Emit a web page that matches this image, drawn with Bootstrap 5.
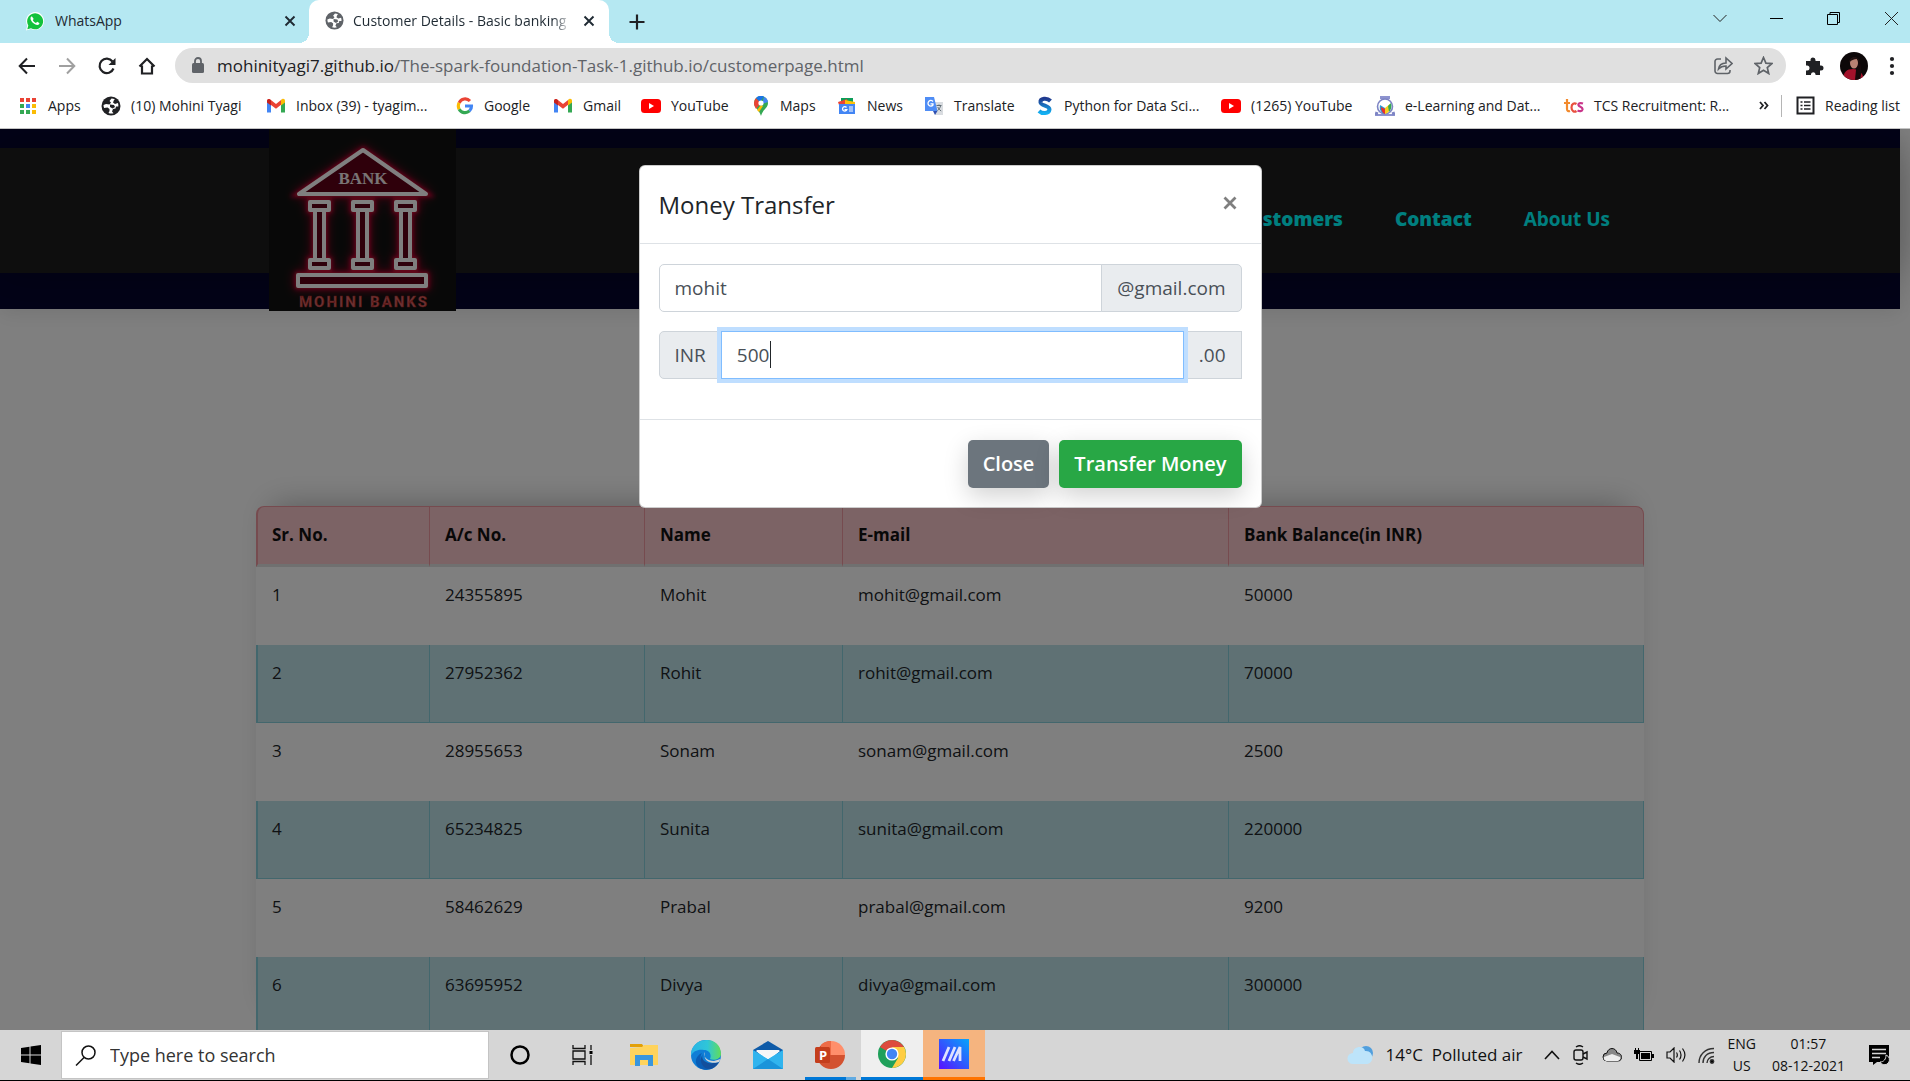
<!DOCTYPE html>
<html lang="en">
<head>
<meta charset="utf-8">
<meta name="viewport" content="width=device-width, initial-scale=1">
<title>Customer Details - Basic banking</title>
<link rel="stylesheet" href="https://cdn.jsdelivr.net/npm/bootstrap@5.3.0/dist/css/bootstrap.min.css">
<style>
body{font-family:"Open Sans","Noto Sans",sans-serif;color:#212529;height:100vh;overflow:hidden}
svg{display:block;flex:none}
button.plain{background:none;border:0;padding:0;color:inherit;display:flex;align-items:center;justify-content:center;flex:none}
/* tab strip */
.tabstrip{background:#b5e8f2;height:43px;font-size:14px;color:#1f2a33}
.tab-idle{width:309px;padding:0 10px 2px 25px;gap:10px}
.tab-live{width:300px;background:#fff;border-radius:10px 10px 0 0;padding:0 11px 2px 16px;gap:9px;position:relative}
.tab-live::before,.tab-live::after{content:"";position:absolute;bottom:0;width:10px;height:10px}
.tab-live::before{left:-10px;background:radial-gradient(circle at 0 0,transparent 10px,#fff 10px)}
.tab-live::after{right:-10px;background:radial-gradient(circle at 100% 0,transparent 10px,#fff 10px)}
.tab-label{overflow:hidden;white-space:nowrap;flex:1}
.tab-live .tab-label{-webkit-mask-image:linear-gradient(90deg,#000 92%,transparent)}
.win-btn{width:57px;height:36px}
button.win-last{width:48px;padding-left:10px}
/* toolbar */
.toolbar{height:45px;padding:0 0 0 7px}
.tool-btn{width:40px;height:36px}
button.menu-btn{width:36px}
.omnibox{height:35px;border-radius:18px;background:#e0e0e0;padding:0 3px 0 16px}
.url{font-size:17px;color:#5f6368;white-space:nowrap;text-decoration:none}
.url b{font-weight:400;color:#202124}
/* bookmarks */
.bookmarks{height:41px;border-bottom:1px solid #c4c4c4;padding:0 8px 5px 18px;display:grid;align-items:center;grid-template-columns:83px 165px 190px 97px 88px 111px 85px 87px 112px 185px 154px 189px 195px 22px 1fr}
.bookmarks a{display:flex;align-items:center;gap:10px;font-size:14px;color:#202124;text-decoration:none;white-space:nowrap}
.bookmarks .reading{border-left:1px solid #b5b5b5;padding-left:14px;height:22px}
/* web page */
.viewport{position:relative;flex:1;min-height:0;overflow:hidden;background:#fff}
.site-head{background:#05052f;margin-right:10px;height:180px;padding-top:19px;box-shadow:0 5px 20px rgba(0,0,0,.08)}
.site-nav{background:#1c1c1c;height:125px;padding:0 290px 0 269px;box-shadow:0 0 40px rgba(0,0,0,.3)}
.brand-logo{margin-top:-19px;align-self:flex-start}
.site-nav .links{gap:52px;padding-top:18px}
.site-nav a{color:#0ff;font-size:19px;font-weight:700;text-decoration:none}
.site-nav a.heavy{font-weight:800}
.accounts{margin:197px 266px 0 256px;border-radius:8px 8px 0 0;box-shadow:0 -16px 30px -16px rgba(0,0,0,.3)}
.accounts table{table-layout:fixed;width:100%;margin:0;border-collapse:separate;border-spacing:0;font-size:17px;background:#fff;border-radius:8px 8px 0 0}
.accounts th,.accounts td{background:none;box-shadow:none;padding:15px;line-height:26px;vertical-align:top;border:0;border-left:1px solid transparent;color:#212529}
.accounts th{height:61px;border-left-color:#ed969e;border-top:1px solid #ed969e;border-bottom:3px solid #e0e0e0;background:#f8c6cb;color:#111}
.accounts th:first-child{border-radius:8px 0 0 0;border-left-width:2px;padding-left:14px}
.accounts th:last-child{border-radius:0 8px 0 0;border-right:1px solid #ed969e}
.accounts td{height:78px}
.accounts td:first-child{border-left-width:2px;padding-left:14px}
.accounts .tinted td{background:#bee2e9;border-left-color:#86cfda;border-bottom:1px solid #86cfda}
.accounts .tinted td:last-child{border-right:1px solid #86cfda}
.shade{position:absolute;inset:0;background:rgba(0,0,0,.5)}
.modal-layer{position:absolute;inset:0;padding:36px 10px 0 0}
.transfer{width:623px;margin:0 auto;font-size:19px}
.transfer .modal-content{border-radius:6px;border:1px solid rgba(0,0,0,.2);background:#fff}
.transfer .modal-header{height:78px;padding:0 19px;border-bottom:1px solid #dee2e6}
.transfer .modal-title{font-size:24px;font-weight:500}
.transfer .dismiss{color:#7f7f7f;width:24px;height:24px;margin-top:-4px}
.transfer .modal-body{padding:20px 19px 40px}
.transfer .input-group{height:48px;margin-bottom:19px}
.transfer .input-group:last-child{margin-bottom:0}
.transfer .form-control,.transfer .input-group-text{font-size:19px;padding:0 15px;border-color:#ced4da;color:#495057;border-radius:5px}
.transfer .input-group-text{background:#e9ecef}
.transfer .is-active{border-color:#80bdff;box-shadow:0 0 0 4px #bfdeff;z-index:3}
.caret{position:absolute;left:112px;top:10px;width:1px;height:27px;background:#212529;z-index:5}
.transfer .modal-footer{padding:20px 19px 19px;gap:10px;border-top:1px solid #dee2e6}
.transfer .modal-footer>*{margin:0}
.transfer .btn{font-size:20px;font-weight:600;height:48px;padding:0 15px;border:0;border-radius:5px;box-shadow:0 8px 24px rgba(0,0,0,.18)}
.btn-grey{background:#6c757d;color:#fff}.btn-go{background:#28a745;color:#fff}
/* taskbar */
.taskbar{height:51px;background:#d6d6d6;border-bottom:1px solid #000;color:#111}
.start{width:61px;height:50px}
.finder{width:428px;height:48px;background:#fff;border:1px solid #c4c4c4;padding-left:13px;gap:14px}
.finder input{border:0;outline:0;font-size:18px;width:300px;padding:0;color:#333}
.finder input::placeholder{color:#333;opacity:1}
.task{width:62px;height:50px;position:relative}
button.task.on-chrome{background:#efefef;border-bottom:3px solid #0078d7}
button.task.on-asus{background:#f5b47f;border-bottom:3px solid #ff7300}
button.task.on-ppt::after{content:"";position:absolute;left:6px;right:5px;bottom:0;height:3px;background:linear-gradient(90deg,#0078d7 80%,#62abe2 80%)}
.weather{font-size:17px;gap:12px}
.tray{gap:12px;padding:0 24px 0 22px}
.notify{padding-right:20px!important}
.stack{font-size:14px;line-height:22px;text-align:center}
</style>
<script src="https://cdn.jsdelivr.net/npm/bootstrap@5.3.0/dist/js/bootstrap.bundle.min.js"></script>
</head>
<body class="d-flex flex-column">

<svg width="0" height="0" class="position-absolute" aria-hidden="true">
<defs>
<symbol id="globe" viewBox="0 0 20 20"><circle cx="10" cy="10" r="9.5" fill="currentColor"/><path d="M10.500 2.500L8.500 5l1.500 1.500-1.500 2L5 8l-2.500 1c0 1 .2 2 .6 3l3.400-.5 2 1.500v2l-1 2c1.500.6 3.500.7 5 .2l-1.500-1.700 1-2.500 2.500-.5.5-2h2.300c.2-1.500 0-2.500-.4-3.500L14 8l-2-1.500 1-2.500 1-.6c-1-.6-2.300-.9-3.500-.9z" fill="#fff"/><path d="M9 8.500l4 .5 1 2-2.500 1.500L9 11z" fill="currentColor"/></symbol>
<symbol id="gm" viewBox="0 0 20 20"><path d="M1 5v11.500h4V9z" fill="#4285f4"/><path d="M15 9v7.500h4V5z" fill="#34a853"/><path d="M1 5c0-1.800 2-2.500 3.300-1.500L10 8l5.700-4.500v4.800L10 12.700 5 9 1 6z" fill="#ea4335"/><path d="M15 4l1-.8c1.500-1 3 0 3 1.800v1.500l-4 3z" fill="#fbbc04"/><path d="M1 5.500V5c0-1.200 1-2 2-2l2 1.200V9.500l-4-3z" fill="#c5221f"/></symbol>
<symbol id="yt" viewBox="0 0 20 20"><rect y="3" width="20" height="14" rx="3.500" fill="#f00"/><path d="M8 7l5 3-5 3z" fill="#fff"/></symbol>
<symbol id="ex" viewBox="0 0 12 12"><path d="M1.500 1.500l9 9M10.500 1.500l-9 9" stroke="currentColor" stroke-width="1.900"/></symbol>
</defs></svg>

<header class="tabstrip d-flex">
  <div class="tab-idle d-flex align-items-center">
    <svg width="20" height="20" viewBox="0 0 20 20"><path d="M1 19.500l1.300-5A9 9 0 1 1 6 18z" fill="#fff"/><path d="M2.300 18.200l1-3.700A8 8 0 1 1 6 17.200z" fill="#13c23c"/><path d="M7 5.500c-.4-.3-1.500.3-1.500 1.800 0 3 4 6.700 6.800 6.700 1.500 0 2.500-1.500 2-2.100l-2.100-1.100-1.200 1.200c-1.500-.5-2.700-1.700-3.200-2.900l.9-1.200z" fill="#fff"/></svg>
    <span class="tab-label">WhatsApp</span>
    <button class="plain" aria-label="Close tab"><svg width="18" height="12"><use href="#ex"/></svg></button>
  </div>
  <div class="tab-live d-flex align-items-center">
    <svg width="19" height="19" color="#5f6368"><use href="#globe"/></svg>
    <span class="tab-label">Customer Details - Basic banking</span>
    <button class="plain" aria-label="Close tab"><svg width="18" height="12"><use href="#ex"/></svg></button>
  </div>
  <button class="plain px-3 ms-1" aria-label="New tab"><svg width="16" height="16" viewBox="0 0 16 16"><path d="M8 .5v15M.5 8h15" stroke="#202124" stroke-width="2.200"/></svg></button>
  <div class="ms-auto d-flex">
    <button class="plain win-btn" aria-label="Search tabs"><svg width="14" height="9" viewBox="0 0 14 9"><path d="M.5 1L7 7.500 13.500 1" fill="none" stroke="#222"/></svg></button>
    <button class="plain win-btn" aria-label="Minimize"><svg width="13" height="13"><path d="M0 6.500h13" stroke="#000"/></svg></button>
    <button class="plain win-btn" aria-label="Restore"><svg width="13" height="13" viewBox="0 0 13 13" fill="none" stroke="#000"><path d="M.5 2.500h10v10H.5zM3 2.500v-2h9.500v10h-2"/></svg></button>
    <button class="plain win-btn win-last" aria-label="Close"><svg width="13" height="13" viewBox="0 0 13 13"><path d="M0 0l13 13M13 0L0 13" stroke="#222"/></svg></button>
  </div>
</header>

<div class="toolbar d-flex align-items-center">
  <button class="plain tool-btn" aria-label="Back"><svg width="18" height="18" viewBox="0 0 18 18" fill="none" stroke="#202124" stroke-width="2"><path d="M17 9H2M9 1.500L1.700 9 9 16.500"/></svg></button>
  <button class="plain tool-btn" aria-label="Forward"><svg width="18" height="18" viewBox="0 0 18 18" fill="none" stroke="#a0a0a0" stroke-width="2"><path d="M1 9h15M9 1.500L16.300 9 9 16.500"/></svg></button>
  <button class="plain tool-btn" aria-label="Reload"><svg width="18" height="18" viewBox="0 0 18 18"><path d="M15.500 11.500A7.200 7.200 0 1 1 14.500 4.500" fill="none" stroke="#202124" stroke-width="2.200"/><path d="M17.500 1v7h-7z" fill="#202124"/></svg></button>
  <button class="plain tool-btn" aria-label="Home"><svg width="18" height="18" viewBox="0 0 18 18"><path d="M4 8.500V16.500h10V8.500M1.500 9.500L9 2l7.500 7.500" fill="none" stroke="#202124" stroke-width="2.200"/></svg></button>
  <div class="omnibox d-flex align-items-center flex-grow-1 ms-2">
    <svg width="14" height="17" viewBox="0 0 14 17"><rect x="1" y="6" width="12" height="10" rx="1.500" fill="#5f6368"/><path d="M4 7V4a3 3 0 0 1 6 0v3" fill="none" stroke="#5f6368" stroke-width="1.800"/></svg>
    <a class="url ms-2 ps-1" href="#"><b>mohinityagi7.github.io</b>/The-spark-foundation-Task-1.github.io/customerpage.html</a>
    <button class="plain tool-btn ms-auto" aria-label="Share"><svg width="19" height="19" viewBox="0 0 19 19" fill="none" stroke="#5f6368" stroke-width="1.600"><path d="M7 3H3.500A2.500 2.500 0 0 0 1 5.500v9.500A2.500 2.500 0 0 0 3.500 17.500h10a2.500 2.500 0 0 0 2.500-2.500v-1M4.500 13c.5-4 3-5.800 7.500-6V2l6 5.500-6 5.500V10c-3.500 0-5.500.8-7.500 3z"/></svg></button>
    <button class="plain tool-btn" aria-label="Bookmark"><svg width="19" height="19" viewBox="0 0 19 19"><path d="M9.500 1.500l2.400 5.600 6 .5-4.600 4 1.400 5.900-5.200-3.200-5.200 3.200 1.400-5.900-4.600-4 6-.5z" fill="none" stroke="#5f6368" stroke-width="1.700"/></svg></button>
  </div>
  <button class="plain tool-btn ms-2" aria-label="Extensions"><svg width="20" height="20" viewBox="0 0 20 20"><path d="M2 5h4.500V4a2.500 2.500 0 0 1 5 0v1H16v4.500h1a2.500 2.500 0 0 1 0 5h-1V19h-4.500v-1a2.300 2.300 0 0 0-4.500 0v1H2v-4.500h1a2.500 2.500 0 0 0 0-5H2z" fill="#202124"/></svg></button>
  <button class="plain tool-btn" aria-label="Profile"><svg width="28" height="28" viewBox="0 0 28 28"><clipPath id="av"><circle cx="14" cy="14" r="14"/></clipPath><g clip-path="url(#av)"><path d="M0 0h28v28H0z" fill="#0c0708"/><path d="M3 28c0-8 4-11 10-11s10 4 11 11z" fill="#a3122b"/><path d="M17 8c5 2 5 12 3 20h-5z" fill="#14090a"/><ellipse cx="14" cy="11" rx="4" ry="5.500" fill="#b98273"/><path d="M9 11c0-7 10-9 11 0l-3-4c-3 0-6 1-8 4z" fill="#201010"/></g></svg></button>
  <button class="plain tool-btn menu-btn" aria-label="Menu"><svg width="6" height="20" fill="#202124"><circle cx="3" cy="3" r="2.100"/><circle cx="3" cy="10" r="2.100"/><circle cx="3" cy="17" r="2.100"/></svg></button>
</div>

<nav class="bookmarks" aria-label="Bookmarks">
  <a href="#"><svg width="20" height="20" viewBox="0 0 20 20"><path d="M2 2h4v4H2zM8 2h4v4H8zM14 2h4v4h-4z" fill="#ea4335"/><path d="M2 8h4v4H2zM2 14h4v4H2z" fill="#34a853"/><path d="M8 8h4v4H8z" fill="#4285f4"/><path d="M14 8h4v4h-4zM14 14h4v4h-4z" fill="#fbbc04"/><path d="M8 14h4v4H8z" fill="#34a853"/></svg>Apps</a>
  <a href="#"><svg width="20" height="20" color="#202124"><use href="#globe"/></svg>(10) Mohini Tyagi</a>
  <a href="#"><svg width="20" height="20"><use href="#gm"/></svg>Inbox (39) - tyagim...</a>
  <a href="#"><svg width="18" height="18" viewBox="0 0 20 20" fill="none" stroke-width="3.500"><path d="M15.500 4.500A7.300 7.300 0 0 0 3.500 6.500" stroke="#ea4335"/><path d="M3.500 6.500a7.500 7.500 0 0 0 0 7" stroke="#fbbc04"/><path d="M3.500 13.500a7.400 7.400 0 0 0 11.500 2" stroke="#34a853"/><path d="M15 15.500c1.500-1.400 2.300-3.200 2.200-5.500H10" stroke="#4285f4"/></svg>Google</a>
  <a href="#"><svg width="20" height="20"><use href="#gm"/></svg>Gmail</a>
  <a href="#"><svg width="20" height="20"><use href="#yt"/></svg>YouTube</a>
  <a href="#"><svg width="18" height="20" viewBox="0 0 18 20"><path d="M9 0a7 7 0 0 1 7 7c0 5-5 6-7 13C7 13 2 12 2 7a7 7 0 0 1 7-7z" fill="#34a853"/><path d="M2 7a7 7 0 0 1 2-5l5 5-5 6C3 11 2 9.500 2 7z" fill="#ea4335"/><path d="M4 2a7 7 0 0 1 8-1.500L8 6z" fill="#1a73e8"/><path d="M12 .7A7 7 0 0 1 16 6L10 8z" fill="#4285f4"/><path d="M9 9l-4 5 2 2 4-6z" fill="#fbbc04"/><circle cx="9" cy="7" r="2.600" fill="#fff"/></svg>Maps</a>
  <a href="#"><svg width="20" height="20" viewBox="0 0 20 20"><path d="M4 2h12v8H4z" fill="#0c9d58"/><path d="M1 6l9-3 1 6H2z" fill="#ea4335"/><path d="M8 4l10 2v4H8z" fill="#ffc107"/><path d="M2 8h16v10H2z" fill="#4285f4"/><path d="M12 11h4M12 13h4M12 15h4" stroke="#fff"/><path d="M9.500 11.500a2.200 2.200 0 1 0 .3 2.200H7.500" stroke="#fff" fill="none" stroke-width="1.300"/></svg>News</a>
  <a href="#"><svg width="20" height="20" viewBox="0 0 20 20"><path d="M8 6h11v13h-8z" fill="#d9dce0"/><path d="M1 1h9l3.500 14H1z" fill="#4f8df5"/><path d="M9 15h4.500L11 19z" fill="#3050b0"/><path d="M9 5.500A2.800 2.800 0 1 0 9 9V7.800H6.500" fill="none" stroke="#fff" stroke-width="1.300"/><path d="M12.500 9.500h5M15 8.500v1M16.500 10c-.5 2-1.500 3.500-3 4.500M13.800 11c.6 1.500 1.800 3 3.400 4" fill="none" stroke="#5f6c75"/></svg>Translate</a>
  <a href="#"><svg width="18" height="20" viewBox="0 0 18 20"><defs><linearGradient id="sg" x2="0" y2="1"><stop stop-color="#203a8f"/><stop offset="1" stop-color="#13b0f2"/></linearGradient></defs><path d="M14.500 5C11 1.500 4 2 4.500 6.500 5 10 13.500 9.500 13.500 13.500 13 18 6 18 3 15" fill="none" stroke="url(#sg)" stroke-width="4"/></svg>Python for Data Sci...</a>
  <a href="#"><svg width="20" height="20"><use href="#yt"/></svg>(1265) YouTube</a>
  <a href="#"><svg width="20" height="20" viewBox="0 0 20 20"><path d="M5 0h10v3H5zM0 18h20v2H0z" fill="#8d93cf"/><circle cx="10" cy="10.500" r="7.500" fill="#fff" stroke="#7d84c4" stroke-width="1.600"/><path d="M2 16l-1 3M18 16l1 3" stroke="#7d84c4" stroke-width="3"/><path d="M5 9l5 3v6c-4-1-6-4-5-9z" fill="#2b9ad8"/><path d="M6 11l4 2v5c-3-1-4-4-4-7z" fill="#e83030"/><path d="M10 12l5-4c1 5-1 9-5 10z" fill="#f9cf1e"/><path d="M13 10l3-3c1 4 0 7-2 9z" fill="#35a853"/></svg>e-Learning and Dat...</a>
  <a href="#"><svg width="20" height="20" viewBox="0 0 20 20" fill="none" stroke-width="2.200"><path d="M3 3v10c0 2 1.500 2.500 3 2M0 7h6" stroke="#f28a2d"/><path d="M12.500 8c-2-1.500-5-.5-5 3.500s3 5 5 3.500" stroke="#e8503e"/><path d="M19 7.500c-3-1-5 0-4.500 1.700.5 1.800 4.500 1.500 4 4.300-.5 2-3 2-5 1" stroke="#c9358a"/></svg>TCS Recruitment: R...</a>
  <button class="plain justify-content-start" aria-label="More bookmarks"><svg width="10" height="9" viewBox="0 0 10 9" fill="none" stroke="#202124" stroke-width="1.800"><path d="M1 1l3 3.500L1 8M5.500 1l3 3.500-3 3.500"/></svg></button>
  <a href="#" class="reading"><svg width="19" height="19" viewBox="0 0 19 19" fill="none" stroke="#202124"><path d="M1.500 1.500h16v16h-16z" stroke-width="2"/><path d="M4.500 6h2M8 6h6.500M4.500 9.500h2M8 9.500h6.500M4.500 13h2M8 13h6.500" stroke-width="1.700"/></svg>Reading list</a>
</nav>

<main class="viewport">
  <div class="site-head">
    <nav class="site-nav d-flex align-items-center">
      <svg class="brand-logo" width="187" height="182" viewBox="0 0 187 182" role="img" aria-label="Mohini Banks">
        <defs><filter id="glow" x="-30%" y="-30%" width="160%" height="160%"><feGaussianBlur stdDeviation="5"/></filter><filter id="soft"><feGaussianBlur stdDeviation="2"/></filter>
        <g id="pillar"><path d="M0 0h19v8H0zM0 58h19v8H0z"/><path d="M5 8h9v50H5z"/></g></defs>
        <path d="M0 0h187v182H0z" fill="#111"/>
        <g stroke="#b0002a" stroke-width="10" fill="#700015" stroke-linejoin="round" filter="url(#glow)" opacity=".6"><path d="M94 21L30 65h127zM29 146h128v11H29z"/><use href="#pillar" x="41" y="73"/><use href="#pillar" x="84" y="73"/><use href="#pillar" x="127" y="73"/></g>
        <g stroke="#d00838" stroke-width="6" fill="none" filter="url(#soft)"><path d="M94 21L30 65h127zM29 146h128v11H29z"/><use href="#pillar" x="41" y="73"/><use href="#pillar" x="84" y="73"/><use href="#pillar" x="127" y="73"/></g>
        <g stroke="#fff" stroke-width="4" fill="#5e0016" stroke-linejoin="round"><path d="M94 21L30 65h127zM29 146h128v11H29z"/><use href="#pillar" x="41" y="73"/><use href="#pillar" x="84" y="73"/><use href="#pillar" x="127" y="73"/></g>
        <text x="94" y="55" text-anchor="middle" font-family="Liberation Serif, serif" font-weight="700" font-size="17" fill="#f3e9ea">BANK</text>
        <text x="95" y="178" text-anchor="middle" font-family="Roboto, sans-serif" font-weight="700" font-size="15" letter-spacing="2" fill="#d96464" stroke="#b02020" stroke-width=".4">MOHINI BANKS</text>
      </svg>
      <div class="links d-flex ms-auto">
        <a class="heavy" href="#">Customers</a><a class="heavy" href="#">Contact</a><a href="#">About Us</a>
      </div>
    </nav>
  </div>
  <div class="accounts">
    <table class="table">
      <colgroup><col style="width:12.46%"><col style="width:15.49%"><col style="width:14.27%"><col style="width:27.81%"><col></colgroup>
      <thead><tr><th>Sr. No.</th><th>A/c No.</th><th>Name</th><th>E-mail</th><th>Bank Balance(in INR)</th></tr></thead>
      <tbody>
        <tr><td>1</td><td>24355895</td><td>Mohit</td><td>mohit@gmail.com</td><td>50000</td></tr>
        <tr class="tinted"><td>2</td><td>27952362</td><td>Rohit</td><td>rohit@gmail.com</td><td>70000</td></tr>
        <tr><td>3</td><td>28955653</td><td>Sonam</td><td>sonam@gmail.com</td><td>2500</td></tr>
        <tr class="tinted"><td>4</td><td>65234825</td><td>Sunita</td><td>sunita@gmail.com</td><td>220000</td></tr>
        <tr><td>5</td><td>58462629</td><td>Prabal</td><td>prabal@gmail.com</td><td>9200</td></tr>
        <tr class="tinted"><td>6</td><td>63695952</td><td>Divya</td><td>divya@gmail.com</td><td>300000</td></tr>
      </tbody>
    </table>
  </div>
  <div class="shade"></div>
  <div class="modal-layer" role="dialog" aria-labelledby="transfer-title">
    <form class="transfer">
      <div class="modal-content">
        <div class="modal-header">
          <h5 class="modal-title" id="transfer-title">Money Transfer</h5>
          <button type="button" class="plain dismiss" aria-label="Close"><svg width="14" height="14" viewBox="0 0 14 14"><path d="M1.500 1.500l11 11M12.500 1.500l-11 11" stroke="currentColor" stroke-width="2.800"/></svg></button>
        </div>
        <div class="modal-body">
          <div class="input-group">
            <input type="text" class="form-control" id="payee" value="mohit" aria-label="Recipient">
            <label class="input-group-text" for="payee">@gmail.com</label>
          </div>
          <div class="input-group">
            <label class="input-group-text" for="amount">INR</label>
            <input type="text" class="form-control is-active" id="amount" value="500">
            <span class="input-group-text">.00</span>
            <span class="caret"></span>
          </div>
        </div>
        <div class="modal-footer">
          <button type="button" class="btn btn-grey">Close</button>
          <button type="button" class="btn btn-go">Transfer Money</button>
        </div>
      </div>
    </form>
  </div>
</main>

<footer class="taskbar d-flex align-items-center">
  <button class="plain start" aria-label="Start"><svg width="20" height="20" viewBox="0 0 20 20"><path d="M0 3l8.500-1.200v7.700H0zM9.500 1.600L20 0v9.500H9.500zM0 10.500h8.500v7.700L0 17zM9.500 10.500H20V20L9.500 18.400z"/></svg></button>
  <label class="finder d-flex align-items-center">
    <svg width="21" height="21" viewBox="0 0 21 21" fill="none" stroke="#111" stroke-width="1.500"><circle cx="13.500" cy="7.500" r="6.500"/><path d="M9 12.500L1 20.500"/></svg>
    <input type="search" placeholder="Type here to search" aria-label="Search">
  </label>
  <button class="plain task" aria-label="Cortana"><svg width="20" height="20"><circle cx="10" cy="10" r="8.500" fill="none" stroke="#000" stroke-width="2.500"/></svg></button>
  <button class="plain task" aria-label="Task view"><svg width="21" height="20" viewBox="0 0 21 20" fill="none" stroke="#111" stroke-width="1.300"><path d="M1 0v3.500h12V0M1 6h12v8H1zM1 20v-3.500h12V20M19 0v5M19 10v10"/><path d="M17.500 6h3v3h-3z" fill="#000" stroke="none"/></svg></button>
  <button class="plain task" aria-label="File Explorer"><svg width="28" height="26" viewBox="0 0 28 24"><path d="M0 1h12l2 3H0z" fill="#e3a008"/><path d="M0 5l12-1 2-2h14v20H0z" fill="#ffd35c"/><path d="M5 23V12h18v11h-5v-6h-8v6z" fill="#3a96dd"/></svg></button>
  <button class="plain task" aria-label="Edge"><svg width="30" height="30" viewBox="0 0 30 30"><defs><linearGradient id="eg"><stop stop-color="#2ab4e6"/><stop offset=".55" stop-color="#2fc6d8"/><stop offset="1" stop-color="#62dd58"/></linearGradient></defs><circle cx="15" cy="15" r="15" fill="#0f7ed6"/><path d="M0 13C2-4 30-5 30 14c0 5-7 7-11 5 2-5-1-9-6-9C7 9 2 11 0 16z" fill="url(#eg)"/><path d="M11 13c-4 5 0 16 12 14.500C18 31 7 31 5 23c-1-5 3-9 6-10z" fill="#0a5db5"/><path d="M12 14c-3 5 3 12 16 8-3 6-10 9-15 5-4-4-4-9-1-13z" fill="#134f9c"/><path d="M14 12c-3 4 2 9 9 9l6.500-2L28 22c-5 2-17 1-14-10z" fill="#d6d6d6"/></svg></button>
  <button class="plain task" aria-label="Mail"><svg width="30" height="28" viewBox="0 0 30 28"><path d="M0 9L15 0l15 9v5H0z" fill="#0f5ba8"/><path d="M3 10h24L15 20z" fill="#fff"/><path d="M0 9l15 9 15-9v19H0z" fill="#30b4ee"/><path d="M3 9h24l-12 9z" fill="#f7f7f7"/><path d="M0 28l15-10 15 10z" fill="#1a94da"/></svg></button>
  <button class="plain task on-ppt" aria-label="PowerPoint"><svg width="30" height="28" viewBox="0 0 30 28"><path d="M16 0a14 14 0 1 0 14 14H16z" fill="#d35230"/><path d="M16 0a14 14 0 0 1 14 14H16z" fill="#ff8f6b"/><path d="M16 0v14H6V4c3-3 6-4 10-4z" fill="#ed6c47"/><rect y="6" width="15" height="16" rx="1.500" fill="#c43e1c"/><text x="4" y="19" font-family="Open Sans, sans-serif" font-weight="700" font-size="13" fill="#fff">P</text></svg></button>
  <button class="plain task on-chrome" aria-label="Chrome"><svg width="28" height="28" viewBox="0 0 28 28"><circle cx="14" cy="14" r="14" fill="#1fa05a"/><path d="M14 14L1.900 7A14 14 0 0 1 26.100 7z" fill="#dd4b3e"/><path d="M14 7h12.100A14 14 0 0 1 14 28l6-10z" fill="#ffcd42"/><circle cx="14" cy="14" r="6.600" fill="#fff"/><circle cx="14" cy="14" r="5.200" fill="#4285f4"/></svg></button>
  <button class="plain task on-asus" aria-label="MyASUS"><svg width="30" height="30" viewBox="0 0 30 30"><defs><linearGradient id="ag" x1="0" y1="1" x2="1" y2="0"><stop stop-color="#5a10ff"/><stop offset="1" stop-color="#05a5fb"/></linearGradient></defs><path d="M0 0h30v30H0z" fill="url(#ag)"/><path d="M4 22l6-14M10 22l6-14M14.500 22L21 8v14" fill="none" stroke="#dfe2ff" stroke-width="2.800"/></svg></button>
  <div class="weather d-flex align-items-center ms-auto">
    <svg width="27" height="22" viewBox="0 0 27 20"><circle cx="19" cy="8" r="7" fill="#519fdd"/><path d="M6 19a5.500 5.500 0 0 1 0-11C6 1 17 0 18 6c9-1 10 13 1 13z" fill="#bde4fa"/></svg>
    <span>14°C&nbsp; Polluted air</span>
  </div>
  <div class="tray d-flex align-items-center">
    <svg width="16" height="10" viewBox="0 0 16 10"><path d="M1 9l7-7.500L15 9" fill="none" stroke="#111" stroke-width="1.600"/></svg>
    <svg width="18" height="20" viewBox="0 0 18 20" fill="none" stroke="#111" stroke-width="1.400"><rect x="2" y="5" width="9" height="10" rx="2"/><path d="M11 9l4-2v7l-4-2M4 2c2-1.500 5-1.500 7 0M4 18c2 1.500 5 1.500 7 0"/></svg>
    <svg width="20" height="14" viewBox="0 0 20 14"><path d="M5 13a4 4 0 0 1 0-8C6-1 14-1 15 5c6 0 6 8 1 8z" fill="#888" stroke="#111"/><path d="M5 13c-2 0-4-2-3-4l8-3 8 3c1 2-1 4-3 4z" fill="#ededed"/></svg>
    <svg width="20" height="15" viewBox="0 0 20 15"><path d="M5.500 3.500h12v9h-12z" fill="none" stroke="#000"/><path d="M7 5h9v6H7zM18 6h2v4h-2zM0 2h6v4H4v5H2V6H0zM1 0h1v2H1zM4 0h1v2H4z"/></svg>
    <svg width="20" height="16" viewBox="0 0 20 16" fill="none" stroke="#111" stroke-width="1.200"><path d="M1 5h3l4-4v14l-4-4H1zM10.500 5.500c1 1.500 1 3.500 0 5M13.500 3.500c2 2.500 2 6.500 0 9M16.500 1.500c3 4 3 9 0 13"/></svg>
    <svg width="17" height="17" viewBox="0 0 17 17" fill="none" stroke="#333" stroke-width="1.400"><path d="M1 16C1 8 7 1.500 16 1.500M5 16C5 10 9 5.500 16 5.500M9 16c0-3.500 3-6.500 7-6.500"/><circle cx="14" cy="14.500" r="1.700" fill="#000"/></svg>
    <div class="stack">ENG<br>US</div>
    <div class="stack ms-1">01:57<br>08-12-2021</div>
  </div>
  <button class="plain notify" aria-label="Notifications"><svg width="21" height="20" viewBox="0 0 21 20"><path d="M0 0h20v17H8l-4 3v-3H0z"/><path d="M3 4.500h14M3 8.500h14M3 12.500h8" stroke="#d6d6d6" stroke-width="1.500"/><path d="M17 10a5 5 0 1 1-6 7c4 0 6-3 6-7z" fill="#000" stroke="#d6d6d6"/></svg></button>
</footer>
</body>
</html>
